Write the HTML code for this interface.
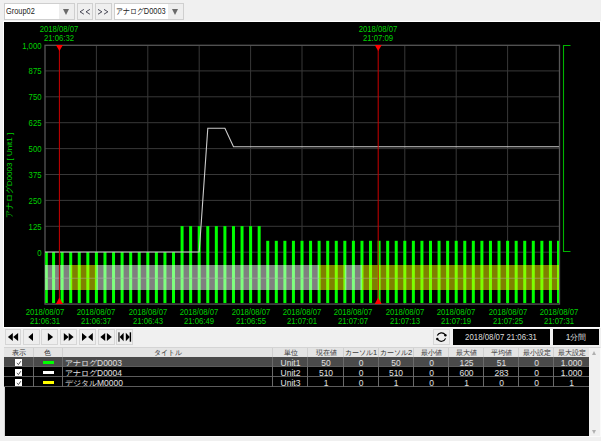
<!DOCTYPE html>
<html><head><meta charset="utf-8">
<style>
*{margin:0;padding:0;box-sizing:border-box}
html,body{width:601px;height:441px;overflow:hidden;background:#f0f0f0;font-family:"Liberation Sans",sans-serif}
.combo{position:absolute;top:3px;height:17px;border:1px solid #cfcfcf;background:#fff;overflow:hidden}
.combo .t{position:absolute;left:0.7px;top:2px;font-size:8.5px;color:#222;white-space:nowrap;transform:scaleX(0.87);transform-origin:left center}
.combo .dd{position:absolute;right:0;top:0;width:15px;height:15px;background:#eeeeee}
.combo .dd:after{content:"";position:absolute;left:4px;top:5px;border-left:3.5px solid transparent;border-right:3.5px solid transparent;border-top:6px solid #6a6a6a}
.tbtn{position:absolute;top:3px;width:17px;height:17px;border:1px solid #d0d0d0;background:#efefef;font-size:8.5px;color:#2a2a3a;text-align:center;line-height:17px;letter-spacing:1.8px;text-indent:1.8px}
#chart{position:absolute;left:3px;top:21px;width:598px;height:307px;background:#000;border:1px solid #fff}
svg.plot{position:absolute;left:0;top:0}
.yl{position:absolute;left:5px;width:36.5px;text-align:right;font-size:8.5px;color:#00d000;line-height:9px;transform:scaleX(0.91);transform-origin:right center}
.xl{position:absolute;width:50px;text-align:center;font-size:8.5px;color:#00d000;line-height:8.5px;white-space:nowrap;transform:scaleX(0.91)}
.ytitle{position:absolute;left:9px;top:175.5px;width:120px;height:9px;margin-left:-60px;margin-top:-4.5px;transform:rotate(-90deg);transform-origin:center;font-size:8px;color:#00d000;text-align:center;line-height:9px;white-space:nowrap}
.btn{position:absolute;top:329px;width:16.8px;height:16px;border:1px solid #d6d6d6;background:#eeeeee}
.box{position:absolute;top:329px;height:16px;background:#000;color:#ddd;font-size:8.5px;text-align:center;line-height:16px}
#table{position:absolute;left:4px;top:347px;width:597px;height:90px;background:#000;border:1px solid #d4d4d4;border-bottom-color:#fafafa;border-right-color:#fafafa}
.th{position:absolute;top:348px;height:9px;background:#e4e4e4;font-size:7.5px;color:#333;text-align:center;line-height:9px;white-space:nowrap;overflow:hidden}
.tr{position:absolute;left:4px;width:585px;height:10px}
.td{position:absolute;height:10px;font-size:8.5px;color:#e0e0e0;text-align:center;line-height:12px;white-space:nowrap}
.cb{position:absolute;left:15px;width:7px;height:7px;background:#fff}
.cb svg{position:absolute;left:0;top:0}
.sw{position:absolute;left:42.5px;width:11.3px;height:3.6px}
#scroll{position:absolute;left:589px;top:348px;width:11px;height:88px;background:#f0f0f0}
</style></head><body>
<div class="combo" style="left:4px;width:71px"><div class="t">Group02</div><div class="dd"></div></div>
<div class="tbtn" style="left:77px;width:16px"></div>
<div class="tbtn" style="left:95px"></div>
<div class="combo" style="left:114px;width:70px"><div class="t"><span style="font-size:7.5px">アナログ</span>D0003</div><div class="dd"></div></div>
<div id="chart"></div>
<div class="btn" style="left:4.7px"></div>
<div class="btn" style="left:23.2px"></div>
<div class="btn" style="left:41.1px"></div>
<div class="btn" style="left:60.1px"></div>
<div class="btn" style="left:79.0px"></div>
<div class="btn" style="left:97.8px"></div>
<div class="btn" style="left:116.4px"></div>
<div class="btn" style="left:433px;width:17px"></div>
<div class="box" style="left:452.5px;width:97px"><span style="display:inline-block;transform:scaleX(0.92)">2018/08/07 21:06:31</span></div>
<div class="box" style="left:553px;width:46px">1<span style="font-size:7.5px">分間</span></div>
<div id="table"></div>
<div class="th" style="left:4px;width:29px"><span style="font-size:7px">表示</span></div>
<div class="th" style="left:33px;width:29px"><span style="font-size:7px">色</span></div>
<div class="th" style="left:62px;width:211px"><span style="font-size:7px">タイトル</span></div>
<div class="th" style="left:273px;width:35px"><span style="font-size:7px">単位</span></div>
<div class="th" style="left:308px;width:36px"><span style="font-size:7px">現在値</span></div>
<div class="th" style="left:344px;width:34px"><span style="font-size:7px">カーソル</span>1</div>
<div class="th" style="left:378px;width:36px"><span style="font-size:7px">カーソル</span>2</div>
<div class="th" style="left:414px;width:35px"><span style="font-size:7px">最小値</span></div>
<div class="th" style="left:449px;width:35px"><span style="font-size:7px">最大値</span></div>
<div class="th" style="left:484px;width:35px"><span style="font-size:7px">平均値</span></div>
<div class="th" style="left:519px;width:35px"><span style="font-size:7px">最小設定</span></div>
<div class="th" style="left:554px;width:35px"><span style="font-size:7px">最大設定</span></div>
<div class="tr" style="top:357px;background:#4a4a4a"></div>
<div class="cb" style="top:359px"><svg width="7" height="7" viewBox="0 0 7 7"><path d="M1.8 4 L3.5 5.6 L5.8 2.2" fill="none" stroke="#222" stroke-width="0.8"/></svg></div>
<div class="sw" style="top:360.8px;background:#00ff00"></div>
<div class="td" style="top:357px;left:65px;text-align:left"><span style="font-size:7.5px">アナログ</span>D0003</div>
<div class="td" style="top:357px;left:273px;width:35px">Unit1</div>
<div class="td" style="top:357px;left:308px;width:36px">50</div>
<div class="td" style="top:357px;left:344px;width:34px">0</div>
<div class="td" style="top:357px;left:378px;width:36px">50</div>
<div class="td" style="top:357px;left:414px;width:35px">0</div>
<div class="td" style="top:357px;left:449px;width:35px">125</div>
<div class="td" style="top:357px;left:484px;width:35px">51</div>
<div class="td" style="top:357px;left:519px;width:35px">0</div>
<div class="td" style="top:357px;left:554px;width:35px">1,000</div>
<div class="tr" style="top:367px;background:#000"></div>
<div class="cb" style="top:369px"><svg width="7" height="7" viewBox="0 0 7 7"><path d="M1.8 4 L3.5 5.6 L5.8 2.2" fill="none" stroke="#222" stroke-width="0.8"/></svg></div>
<div class="sw" style="top:370.8px;background:#ffffff"></div>
<div class="td" style="top:367px;left:65px;text-align:left"><span style="font-size:7.5px">アナログ</span>D0004</div>
<div class="td" style="top:367px;left:273px;width:35px">Unit2</div>
<div class="td" style="top:367px;left:308px;width:36px">510</div>
<div class="td" style="top:367px;left:344px;width:34px">0</div>
<div class="td" style="top:367px;left:378px;width:36px">510</div>
<div class="td" style="top:367px;left:414px;width:35px">0</div>
<div class="td" style="top:367px;left:449px;width:35px">600</div>
<div class="td" style="top:367px;left:484px;width:35px">283</div>
<div class="td" style="top:367px;left:519px;width:35px">0</div>
<div class="td" style="top:367px;left:554px;width:35px">1,000</div>
<div class="tr" style="top:377px;background:#000"></div>
<div class="cb" style="top:379px"><svg width="7" height="7" viewBox="0 0 7 7"><path d="M1.8 4 L3.5 5.6 L5.8 2.2" fill="none" stroke="#222" stroke-width="0.8"/></svg></div>
<div class="sw" style="top:380.8px;background:#ffff00"></div>
<div class="td" style="top:377px;left:65px;text-align:left"><span style="font-size:7.5px">デジタル</span>M0000</div>
<div class="td" style="top:377px;left:273px;width:35px">Unit3</div>
<div class="td" style="top:377px;left:308px;width:36px">1</div>
<div class="td" style="top:377px;left:344px;width:34px">0</div>
<div class="td" style="top:377px;left:378px;width:36px">1</div>
<div class="td" style="top:377px;left:414px;width:35px">0</div>
<div class="td" style="top:377px;left:449px;width:35px">1</div>
<div class="td" style="top:377px;left:484px;width:35px">0</div>
<div class="td" style="top:377px;left:519px;width:35px">0</div>
<div class="td" style="top:377px;left:554px;width:35px">1</div>
<div style="position:absolute;left:4px;top:366px;width:585px;height:1px;background:#5c5c5c"></div>
<div style="position:absolute;left:4px;top:376px;width:585px;height:1px;background:#5c5c5c"></div>
<div style="position:absolute;left:4px;top:386px;width:585px;height:1px;background:#5c5c5c"></div>
<div style="position:absolute;left:33px;top:357px;width:1px;height:30px;background:#6a6a6a"></div>
<div style="position:absolute;left:33px;top:348px;width:1px;height:9px;background:#d0d0d0"></div>
<div style="position:absolute;left:62px;top:357px;width:1px;height:30px;background:#6a6a6a"></div>
<div style="position:absolute;left:62px;top:348px;width:1px;height:9px;background:#d0d0d0"></div>
<div style="position:absolute;left:272px;top:357px;width:1px;height:30px;background:#6a6a6a"></div>
<div style="position:absolute;left:272px;top:348px;width:1px;height:9px;background:#d0d0d0"></div>
<div style="position:absolute;left:307px;top:357px;width:1px;height:30px;background:#6a6a6a"></div>
<div style="position:absolute;left:307px;top:348px;width:1px;height:9px;background:#d0d0d0"></div>
<div style="position:absolute;left:343px;top:357px;width:1px;height:30px;background:#6a6a6a"></div>
<div style="position:absolute;left:343px;top:348px;width:1px;height:9px;background:#d0d0d0"></div>
<div style="position:absolute;left:378px;top:357px;width:1px;height:30px;background:#6a6a6a"></div>
<div style="position:absolute;left:378px;top:348px;width:1px;height:9px;background:#d0d0d0"></div>
<div style="position:absolute;left:413px;top:357px;width:1px;height:30px;background:#6a6a6a"></div>
<div style="position:absolute;left:413px;top:348px;width:1px;height:9px;background:#d0d0d0"></div>
<div style="position:absolute;left:448px;top:357px;width:1px;height:30px;background:#6a6a6a"></div>
<div style="position:absolute;left:448px;top:348px;width:1px;height:9px;background:#d0d0d0"></div>
<div style="position:absolute;left:483px;top:357px;width:1px;height:30px;background:#6a6a6a"></div>
<div style="position:absolute;left:483px;top:348px;width:1px;height:9px;background:#d0d0d0"></div>
<div style="position:absolute;left:518px;top:357px;width:1px;height:30px;background:#6a6a6a"></div>
<div style="position:absolute;left:518px;top:348px;width:1px;height:9px;background:#d0d0d0"></div>
<div style="position:absolute;left:553px;top:357px;width:1px;height:30px;background:#6a6a6a"></div>
<div style="position:absolute;left:553px;top:348px;width:1px;height:9px;background:#d0d0d0"></div>
<div id="scroll"><div style="position:absolute;left:3px;top:3px;border-left:2.5px solid transparent;border-right:2.5px solid transparent;border-bottom:4px solid #b0b0b0"></div><div style="position:absolute;left:3px;top:82px;border-left:2.5px solid transparent;border-right:2.5px solid transparent;border-top:4px solid #b0b0b0"></div></div>
<svg class="plot" width="601" height="441" viewBox="0 0 601 441">
<line x1="96.4" y1="45.0" x2="96.4" y2="304.0" stroke="#383838" stroke-width="1"/>
<line x1="147.8" y1="45.0" x2="147.8" y2="304.0" stroke="#383838" stroke-width="1"/>
<line x1="199.2" y1="45.0" x2="199.2" y2="304.0" stroke="#383838" stroke-width="1"/>
<line x1="250.6" y1="45.0" x2="250.6" y2="304.0" stroke="#383838" stroke-width="1"/>
<line x1="302.0" y1="45.0" x2="302.0" y2="304.0" stroke="#383838" stroke-width="1"/>
<line x1="353.4" y1="45.0" x2="353.4" y2="304.0" stroke="#383838" stroke-width="1"/>
<line x1="404.8" y1="45.0" x2="404.8" y2="304.0" stroke="#383838" stroke-width="1"/>
<line x1="456.2" y1="45.0" x2="456.2" y2="304.0" stroke="#383838" stroke-width="1"/>
<line x1="507.6" y1="45.0" x2="507.6" y2="304.0" stroke="#383838" stroke-width="1"/>
<line x1="45.0" y1="70.9" x2="559.0" y2="70.9" stroke="#383838" stroke-width="1"/>
<line x1="45.0" y1="96.8" x2="559.0" y2="96.8" stroke="#383838" stroke-width="1"/>
<line x1="45.0" y1="122.7" x2="559.0" y2="122.7" stroke="#383838" stroke-width="1"/>
<line x1="45.0" y1="148.6" x2="559.0" y2="148.6" stroke="#383838" stroke-width="1"/>
<line x1="45.0" y1="174.5" x2="559.0" y2="174.5" stroke="#383838" stroke-width="1"/>
<line x1="45.0" y1="200.4" x2="559.0" y2="200.4" stroke="#383838" stroke-width="1"/>
<line x1="45.0" y1="226.3" x2="559.0" y2="226.3" stroke="#383838" stroke-width="1"/>
<line x1="45.0" y1="252.2" x2="559.0" y2="252.2" stroke="#383838" stroke-width="1"/>
<line x1="45.0" y1="278.1" x2="559.0" y2="278.1" stroke="#383838" stroke-width="1"/>
<rect x="45" y="45.3" width="514.5" height="258.8" fill="none" stroke="#565656" stroke-width="1.3"/>
<rect x="45.20" y="252.0" width="2.60" height="51.0" fill="#00ff00"/>
<rect x="52.07" y="252.0" width="3.00" height="51.0" fill="#00ff00"/>
<rect x="60.63" y="252.0" width="3.00" height="51.0" fill="#00ff00"/>
<rect x="69.20" y="252.0" width="3.00" height="51.0" fill="#00ff00"/>
<rect x="77.77" y="252.0" width="3.00" height="51.0" fill="#00ff00"/>
<rect x="86.33" y="252.0" width="3.00" height="51.0" fill="#00ff00"/>
<rect x="94.90" y="252.0" width="3.00" height="51.0" fill="#00ff00"/>
<rect x="103.47" y="252.0" width="3.00" height="51.0" fill="#00ff00"/>
<rect x="112.03" y="252.0" width="3.00" height="51.0" fill="#00ff00"/>
<rect x="120.60" y="252.0" width="3.00" height="51.0" fill="#00ff00"/>
<rect x="129.17" y="252.0" width="3.00" height="51.0" fill="#00ff00"/>
<rect x="137.73" y="252.0" width="3.00" height="51.0" fill="#00ff00"/>
<rect x="146.30" y="252.0" width="3.00" height="51.0" fill="#00ff00"/>
<rect x="154.87" y="252.0" width="3.00" height="51.0" fill="#00ff00"/>
<rect x="163.43" y="252.0" width="3.00" height="51.0" fill="#00ff00"/>
<rect x="172.00" y="252.0" width="3.00" height="51.0" fill="#00ff00"/>
<rect x="180.57" y="226.1" width="3.00" height="76.9" fill="#00ff00"/>
<rect x="189.13" y="226.1" width="3.00" height="76.9" fill="#00ff00"/>
<rect x="197.70" y="226.1" width="3.00" height="76.9" fill="#00ff00"/>
<rect x="206.27" y="226.1" width="3.00" height="76.9" fill="#00ff00"/>
<rect x="214.83" y="226.1" width="3.00" height="76.9" fill="#00ff00"/>
<rect x="223.40" y="226.1" width="3.00" height="76.9" fill="#00ff00"/>
<rect x="231.97" y="226.1" width="3.00" height="76.9" fill="#00ff00"/>
<rect x="240.53" y="226.1" width="3.00" height="76.9" fill="#00ff00"/>
<rect x="249.10" y="226.1" width="3.00" height="76.9" fill="#00ff00"/>
<rect x="257.67" y="226.1" width="3.00" height="76.9" fill="#00ff00"/>
<rect x="266.23" y="240.8" width="3.00" height="62.2" fill="#00ff00"/>
<rect x="274.80" y="240.8" width="3.00" height="62.2" fill="#00ff00"/>
<rect x="283.37" y="240.8" width="3.00" height="62.2" fill="#00ff00"/>
<rect x="291.93" y="240.8" width="3.00" height="62.2" fill="#00ff00"/>
<rect x="300.50" y="240.8" width="3.00" height="62.2" fill="#00ff00"/>
<rect x="309.07" y="240.8" width="3.00" height="62.2" fill="#00ff00"/>
<rect x="317.63" y="240.8" width="3.00" height="62.2" fill="#00ff00"/>
<rect x="326.20" y="240.8" width="3.00" height="62.2" fill="#00ff00"/>
<rect x="334.77" y="240.8" width="3.00" height="62.2" fill="#00ff00"/>
<rect x="343.33" y="240.8" width="3.00" height="62.2" fill="#00ff00"/>
<rect x="351.90" y="240.8" width="3.00" height="62.2" fill="#00ff00"/>
<rect x="360.47" y="240.8" width="3.00" height="62.2" fill="#00ff00"/>
<rect x="369.03" y="240.8" width="3.00" height="62.2" fill="#00ff00"/>
<rect x="377.60" y="240.8" width="3.00" height="62.2" fill="#00ff00"/>
<rect x="386.17" y="240.8" width="3.00" height="62.2" fill="#00ff00"/>
<rect x="394.73" y="240.8" width="3.00" height="62.2" fill="#00ff00"/>
<rect x="403.30" y="240.8" width="3.00" height="62.2" fill="#00ff00"/>
<rect x="411.87" y="240.8" width="3.00" height="62.2" fill="#00ff00"/>
<rect x="420.43" y="240.8" width="3.00" height="62.2" fill="#00ff00"/>
<rect x="429.00" y="240.8" width="3.00" height="62.2" fill="#00ff00"/>
<rect x="437.57" y="240.8" width="3.00" height="62.2" fill="#00ff00"/>
<rect x="446.13" y="240.8" width="3.00" height="62.2" fill="#00ff00"/>
<rect x="454.70" y="240.8" width="3.00" height="62.2" fill="#00ff00"/>
<rect x="463.27" y="240.8" width="3.00" height="62.2" fill="#00ff00"/>
<rect x="471.83" y="240.8" width="3.00" height="62.2" fill="#00ff00"/>
<rect x="480.40" y="240.8" width="3.00" height="62.2" fill="#00ff00"/>
<rect x="488.97" y="240.8" width="3.00" height="62.2" fill="#00ff00"/>
<rect x="497.53" y="240.8" width="3.00" height="62.2" fill="#00ff00"/>
<rect x="506.10" y="240.8" width="3.00" height="62.2" fill="#00ff00"/>
<rect x="514.67" y="240.8" width="3.00" height="62.2" fill="#00ff00"/>
<rect x="523.23" y="240.8" width="3.00" height="62.2" fill="#00ff00"/>
<rect x="531.80" y="240.8" width="3.00" height="62.2" fill="#00ff00"/>
<rect x="540.37" y="240.8" width="3.00" height="62.2" fill="#00ff00"/>
<rect x="548.93" y="240.8" width="3.00" height="62.2" fill="#00ff00"/>
<rect x="557.00" y="240.8" width="2.00" height="62.2" fill="#00ff00"/>
<rect x="45.00" y="265.0" width="25.70" height="25.0" fill="#ffffff" fill-opacity="0.5"/>
<rect x="70.70" y="265.0" width="25.70" height="25.0" fill="#ffff00" fill-opacity="0.5"/>
<rect x="96.40" y="265.0" width="222.73" height="25.0" fill="#ffffff" fill-opacity="0.5"/>
<rect x="319.13" y="265.0" width="25.70" height="25.0" fill="#ffff00" fill-opacity="0.5"/>
<rect x="344.83" y="265.0" width="17.13" height="25.0" fill="#ffffff" fill-opacity="0.5"/>
<rect x="361.97" y="265.0" width="197.03" height="25.0" fill="#ffff00" fill-opacity="0.5"/>
<line x1="45.0" y1="278.5" x2="559.0" y2="278.5" stroke="#a0a0a0" stroke-opacity="0.3" stroke-width="1"/>
<polyline fill="none" stroke="#cccccc" stroke-width="1.1" points="45.0,252.0 199.2,252.0 207.8,128.2 224.9,128.2 233.5,146.8 559.0,146.8"/>
<line x1="59.4" y1="45.0" x2="59.4" y2="304.0" stroke="#cc0000" stroke-width="1"/>
<polygon points="55.9,45.0 62.9,45.0 59.4,51.0" fill="#ff0000"/>
<polygon points="55.9,304.0 62.9,304.0 59.4,297.5" fill="#ff0000"/>
<line x1="378.2" y1="45.0" x2="378.2" y2="304.0" stroke="#cc0000" stroke-width="1"/>
<polygon points="374.7,45.0 381.7,45.0 378.2,51.0" fill="#ff0000"/>
<polygon points="374.7,304.0 381.7,304.0 378.2,297.5" fill="#ff0000"/>
<polyline fill="none" stroke="#00b400" stroke-width="1.1" points="570.5,45.5 563.5,45.5 563.5,251.5 570.5,251.5"/>
<g fill="#000"><path d="M7.9 337.0 L12.8 333 L12.8 341 Z"/><path d="M13.2 337.0 L18.1 333 L18.1 341 Z"/><path d="M28.3 337.0 L33 333 L33 341 Z"/><path d="M47.9 333 L53.1 337.0 L47.9 341 Z"/><path d="M63.8 333 L68.7 337.0 L63.8 341 Z"/><path d="M68.7 333 L73.6 337.0 L68.7 341 Z"/><path d="M82 333 L86.9 337.0 L82 341 Z"/><path d="M88.1 337.0 L92.8 333 L92.8 341 Z"/><path d="M100.3 337.0 L105.2 333 L105.2 341 Z"/><path d="M106.9 333 L111.8 337.0 L106.9 341 Z"/><rect x="118.1" y="332.3" width="1.7" height="9.4" fill="#555"/><path d="M119.6 337.0 L123.6 332.8 L123.6 341.2 Z"/><path d="M125.8 332.8 L129.8 337.0 L125.8 341.2 Z"/><rect x="129.7" y="332.3" width="1.4" height="9.4"/><polyline points="83.9,9.4 80.0,11.8 83.9,14.2" fill="none" stroke="#3a3a48" stroke-width="0.9"/><polyline points="89.9,9.4 86.0,11.8 89.9,14.2" fill="none" stroke="#3a3a48" stroke-width="0.9"/><polyline points="98.0,9.4 101.9,11.8 98.0,14.2" fill="none" stroke="#3a3a48" stroke-width="0.9"/><polyline points="104.0,9.4 107.9,11.8 104.0,14.2" fill="none" stroke="#3a3a48" stroke-width="0.9"/><path d="M437.3 335.6 A4.6 4.6 0 0 1 445.2 334.6" fill="none" stroke="#000" stroke-width="1.2"/><path d="M445.6 338.4 A4.6 4.6 0 0 1 437.6 339.4" fill="none" stroke="#000" stroke-width="1.2"/><circle cx="445.4" cy="335.2" r="1.2"/><circle cx="437.3" cy="339" r="1.2"/></g>
</svg>
<div class="yl" style="top:41.5px">1,000</div>
<div class="yl" style="top:67.4px">875</div>
<div class="yl" style="top:93.2px">750</div>
<div class="yl" style="top:119.1px">625</div>
<div class="yl" style="top:145.0px">500</div>
<div class="yl" style="top:170.9px">375</div>
<div class="yl" style="top:196.8px">250</div>
<div class="yl" style="top:222.6px">125</div>
<div class="yl" style="top:248.5px">0</div>
<div class="xl" style="left:20.0px;top:308px">2018/08/07<br>21:06:31</div>
<div class="xl" style="left:71.4px;top:308px">2018/08/07<br>21:06:37</div>
<div class="xl" style="left:122.8px;top:308px">2018/08/07<br>21:06:43</div>
<div class="xl" style="left:174.2px;top:308px">2018/08/07<br>21:06:49</div>
<div class="xl" style="left:225.6px;top:308px">2018/08/07<br>21:06:55</div>
<div class="xl" style="left:277.0px;top:308px">2018/08/07<br>21:07:01</div>
<div class="xl" style="left:328.4px;top:308px">2018/08/07<br>21:07:07</div>
<div class="xl" style="left:379.8px;top:308px">2018/08/07<br>21:07:13</div>
<div class="xl" style="left:431.2px;top:308px">2018/08/07<br>21:07:19</div>
<div class="xl" style="left:482.6px;top:308px">2018/08/07<br>21:07:25</div>
<div class="xl" style="left:534.0px;top:308px">2018/08/07<br>21:07:31</div>
<div class="xl" style="left:34.4px;top:25.3px">2018/08/07<br>21:06:32</div>
<div class="xl" style="left:353.2px;top:25.3px">2018/08/07<br>21:07:09</div>
<div class="ytitle"><span style="font-size:7.5px">アナログ</span>D0003 [ Unit1 ]</div>
</body></html>
